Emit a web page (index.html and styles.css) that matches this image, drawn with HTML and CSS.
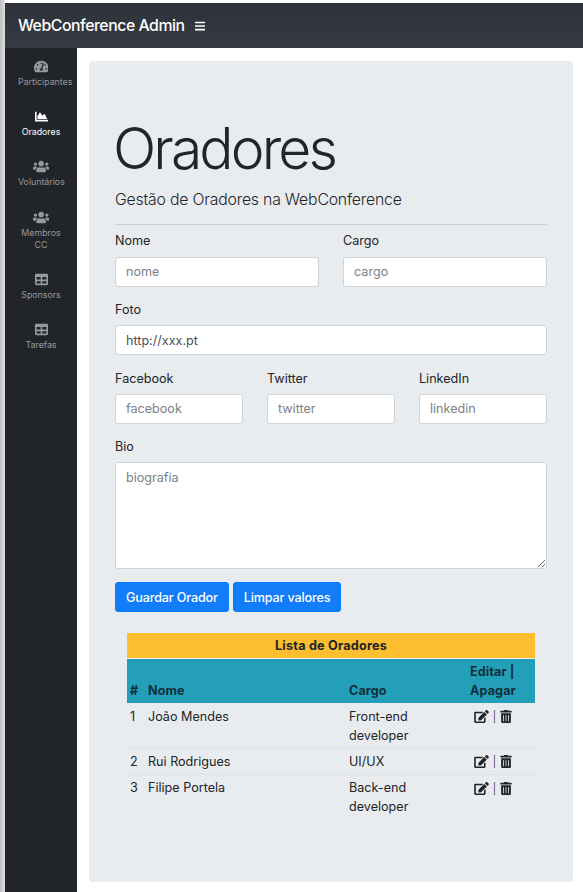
FILE: index.html
```html
<!DOCTYPE html>
<html lang="pt">
<head>
<meta charset="utf-8">
<title>WebConference Admin</title>
<link rel="stylesheet" href="styles.css">
</head>
<body>
<svg class="defs" aria-hidden="true">
  <symbol id="i-gauge" viewBox="0 0 576 512"><path d="M288 32C128.94 32 0 160.94 0 320c0 52.8 14.25 102.26 39.06 144.8 5.61 9.62 16.3 15.2 27.44 15.2h443c11.14 0 21.83-5.58 27.44-15.2C561.75 422.26 576 372.8 576 320c0-159.06-128.94-288-288-288zm0 64c14.71 0 26.58 10.13 30.32 23.65-1.11 2.26-2.64 4.23-3.45 6.67l-9.22 27.67c-5.13 3.49-10.97 6.01-17.64 6.01-17.67 0-32-14.33-32-32S270.33 96 288 96zM96 384c-17.67 0-32-14.33-32-32s14.33-32 32-32 32 14.33 32 32-14.33 32-32 32zm48-160c-17.67 0-32-14.33-32-32s14.33-32 32-32 32 14.33 32 32-14.33 32-32 32zm246.77-72.41l-61.33 184C343.13 347.33 352 364.54 352 384c0 11.72-3.38 22.55-8.88 32H232.88c-5.5-9.45-8.88-20.28-8.88-32 0-33.94 26.5-61.43 59.9-63.59l61.34-184.01c4.17-12.56 17.73-19.45 30.36-15.17 12.57 4.19 19.35 17.79 15.17 30.36zm14.66 57.2l15.52-46.55c3.47-1.29 7.13-2.23 11.05-2.23 17.67 0 32 14.33 32 32s-14.33 32-32 32c-11.38-.01-20.89-6.28-26.57-15.22zM480 384c-17.67 0-32-14.33-32-32s14.33-32 32-32 32 14.33 32 32-14.33 32-32 32z"/></symbol>
  <symbol id="i-chart" viewBox="0 0 512 512"><path d="M500 384c6.6 0 12 5.4 12 12v40c0 6.6-5.4 12-12 12H12c-6.6 0-12-5.4-12-12V76c0-6.6 5.4-12 12-12h40c6.6 0 12 5.4 12 12v308h436zM372.7 159.5L288 216l-85.3-113.7c-5.1-6.8-15.5-6.3-19.9 1L96 248v104h384l-89.9-187.8c-3.2-6.5-11.4-8.7-17.4-4.7z"/></symbol>
  <symbol id="i-users" viewBox="0 0 640 512"><path d="M96 224c35.3 0 64-28.7 64-64s-28.7-64-64-64-64 28.7-64 64 28.7 64 64 64zm448 0c35.3 0 64-28.7 64-64s-28.7-64-64-64-64 28.7-64 64 28.7 64 64 64zm32 32h-64c-17.6 0-33.5 7.1-45.1 18.6 40.3 22.1 68.9 62 75.1 109.4h66c17.7 0 32-14.3 32-32v-32c0-35.3-28.7-64-64-64zm-256 0c61.9 0 112-50.1 112-112S381.9 32 320 32 208 82.1 208 144s50.1 112 112 112zm76.8 32h-8.3c-20.8 10-43.9 16-68.5 16s-47.6-6-68.5-16h-8.3C179.6 288 128 339.6 128 403.2V432c0 26.5 21.5 48 48 48h288c26.5 0 48-21.5 48-48v-28.8c0-63.6-51.6-115.2-115.2-115.2zm-223.7-13.4C161.5 263.1 145.6 256 128 256H64c-35.3 0-64 28.7-64 64v32c0 17.7 14.3 32 32 32h65.9c6.3-47.4 34.9-87.3 75.2-109.4z"/></symbol>
  <symbol id="i-table" viewBox="0 0 512 512"><path d="M464 32H48C21.49 32 0 53.49 0 80v352c0 26.51 21.49 48 48 48h416c26.51 0 48-21.49 48-48V80c0-26.51-21.49-48-48-48zM224 416H64v-96h160v96zm0-160H64v-96h160v96zm224 160H288v-96h160v96zm0-160H288v-96h160v96z"/></symbol>
  <symbol id="i-edit" viewBox="0 0 576 512"><path d="M402.6 83.2l90.2 90.2c3.8 3.8 3.8 10 0 13.8L274.4 405.6l-92.8 10.3c-12.4 1.4-22.9-9.1-21.5-21.5l10.3-92.8L388.8 83.2c3.8-3.8 10-3.8 13.8 0zm162-22.9l-48.8-48.8c-15.2-15.2-39.9-15.2-55.2 0l-35.4 35.4c-3.8 3.8-3.8 10 0 13.8l90.2 90.2c3.8 3.8 10 3.8 13.8 0l35.4-35.4c15.2-15.3 15.2-40 0-55.2zM384 346.2V448H64V128h229.8c3.2 0 6.2-1.3 8.5-3.5l40-40c7.6-7.6 2.2-20.5-8.5-20.5H48C21.5 64 0 85.5 0 112v352c0 26.5 21.5 48 48 48h352c26.5 0 48-21.5 48-48V306.2c0-10.7-12.9-16-20.5-8.5l-40 40c-2.2 2.3-3.5 5.3-3.5 8.5z"/></symbol>
  <symbol id="i-trash" viewBox="0 0 448 512"><path d="M32 464a48 48 0 0 0 48 48h288a48 48 0 0 0 48-48V128H32zm272-256a16 16 0 0 1 32 0v224a16 16 0 0 1-32 0zm-96 0a16 16 0 0 1 32 0v224a16 16 0 0 1-32 0zm-96 0a16 16 0 0 1 32 0v224a16 16 0 0 1-32 0zM432 32H312l-9.4-18.7A24 24 0 0 0 281.1 0H166.8a23.72 23.72 0 0 0-21.4 13.3L136 32H16A16 16 0 0 0 0 48v32a16 16 0 0 0 16 16h416a16 16 0 0 0 16-16V48a16 16 0 0 0-16-16z"/></symbol>
  <symbol id="i-bars" viewBox="0 0 448 512"><path d="M16 132h416c8.837 0 16-7.163 16-16V76c0-8.837-7.163-16-16-16H16C7.163 60 0 67.163 0 76v40c0 8.837 7.163 16 16 16zm0 160h416c8.837 0 16-7.163 16-16v-40c0-8.837-7.163-16-16-16H16c-8.837 0-16 7.163-16 16v40c0 8.837 7.163 16 16 16zm0 160h416c8.837 0 16-7.163 16-16v-40c0-8.837-7.163-16-16-16H16c-8.837 0-16 7.163-16 16v40c0 8.837 7.163 16 16 16z"/></symbol>
</svg>
<div class="shell">
  <header class="topbar">
    <span class="brand">WebConference Admin</span>
    <svg class="bars"><use href="#i-bars"/></svg>
  </header>
  <div class="body-row">
    <nav class="sidebar">
      <a class="nav-item"><svg class="nav-icon gauge"><use href="#i-gauge"/></svg><span class="nav-text">Participantes</span></a>
      <a class="nav-item active"><svg class="nav-icon"><use href="#i-chart"/></svg><span class="nav-text">Oradores</span></a>
      <a class="nav-item"><svg class="nav-icon wide"><use href="#i-users"/></svg><span class="nav-text">Voluntários</span></a>
      <a class="nav-item"><svg class="nav-icon wide"><use href="#i-users"/></svg><span class="nav-text">Membros<br>CC</span></a>
      <a class="nav-item"><svg class="nav-icon"><use href="#i-table"/></svg><span class="nav-text">Sponsors</span></a>
      <a class="nav-item"><svg class="nav-icon"><use href="#i-table"/></svg><span class="nav-text">Tarefas</span></a>
    </nav>
    <main class="content">
      <section class="jumbotron">
        <h1 class="title">Oradores</h1>
        <p class="lead">Gestão de Oradores na WebConference</p>
        <hr class="rule">
        <form class="form">
          <div class="row two">
            <label class="field"><span>Nome</span><input class="input" placeholder="nome"></label>
            <label class="field"><span>Cargo</span><input class="input" placeholder="cargo"></label>
          </div>
          <label class="field"><span>Foto</span><input class="input" value="http://xxx.pt"></label>
          <div class="row three">
            <label class="field"><span>Facebook</span><input class="input" placeholder="facebook"></label>
            <label class="field"><span>Twitter</span><input class="input" placeholder="twitter"></label>
            <label class="field"><span>LinkedIn</span><input class="input" placeholder="linkedin"></label>
          </div>
          <label class="field"><span>Bio</span><textarea class="input area" placeholder="biografia"></textarea></label>
          <div class="buttons">
            <button type="button" class="btn">Guardar Orador</button>
            <button type="button" class="btn">Limpar valores</button>
          </div>
        </form>
        <div class="table-wrap">
          <table class="table">
            <colgroup><col class="c-n"><col class="c-name"><col class="c-role"><col class="c-act"></colgroup>
            <thead>
              <tr class="head-title"><th colspan="4">Lista de Oradores</th></tr>
              <tr class="head-cols"><th>#</th><th>Nome</th><th>Cargo</th><th class="act-head">Editar | Apagar</th></tr>
            </thead>
            <tbody>
              <tr><td>1</td><td>João Mendes</td><td>Front-end developer</td><td class="actions"><svg class="a-edit"><use href="#i-edit"/></svg><i class="sep">|</i><svg class="a-trash"><use href="#i-trash"/></svg></td></tr>
              <tr><td>2</td><td>Rui Rodrigues</td><td>UI/UX</td><td class="actions"><svg class="a-edit"><use href="#i-edit"/></svg><i class="sep">|</i><svg class="a-trash"><use href="#i-trash"/></svg></td></tr>
              <tr><td>3</td><td>Filipe Portela</td><td>Back-end developer</td><td class="actions"><svg class="a-edit"><use href="#i-edit"/></svg><i class="sep">|</i><svg class="a-trash"><use href="#i-trash"/></svg></td></tr>
            </tbody>
          </table>
        </div>
      </section>
    </main>
  </div>
</div>
</body>
</html>
```
FILE: styles.css
```css
* { box-sizing: border-box; }
html, body { height: 100%; }
body {
  margin: 0;
  background: #fff;
  color: #212529;
  font-family: Inter, "Liberation Sans", sans-serif;
  font-size: 12.6px;
  line-height: 19px;
  overflow: hidden;
}
.defs { display: none; }
.shell {
  height: 892px;
  padding: 3px 0 0 5px;
  background: linear-gradient(to right, #bdbdbd, #e0e0e0 5px);
  background-size: 5px 100%;
  background-repeat: no-repeat;
  display: flex;
  flex-direction: column;
}
.topbar {
  height: 45px;
  flex: none;
  display: flex;
  align-items: center;
  padding-left: 13px;
  background: linear-gradient(to bottom, #2e333a, #353a43);
  color: #fff;
}
.brand { font-size: 15.8px; font-weight: 500; letter-spacing: -0.45px; }
.bars { width: 10px; height: 12px; margin-left: 10px; fill: #fff; }
.body-row { flex: 1; display: flex; min-height: 0; }
.sidebar {
  width: 72px;
  flex: none;
  background: #212529;
  padding-top: 12px;
  display: flex;
  flex-direction: column;
}
.nav-item {
  display: block;
  padding: 0 13px;
  text-align: center;
  color: #96999c;
  font-size: 8.8px;
  line-height: 12px;
  margin-bottom: 22.2px;
}
.nav-item.active { color: #fff; }
.nav-icon { display: block; width: 13px; height: 13px; fill: currentColor; margin: 0 auto 3px; }
.nav-icon.gauge { width: 14.6px; }
.nav-icon.wide { width: 16.25px; }
.nav-text { display: block; white-space: nowrap; }
.content { flex: 1; padding: 13px 10px 10px 12px; min-width: 0; }
.jumbotron {
  height: 100%;
  background: #e9ecef;
  border-radius: 4px;
  padding: 54px 26px 0;
}
.title { margin: 0 0 0 -2px; font-size: 57px; line-height: 68px; font-weight: 300; letter-spacing: -2.9px; }
.lead { margin: 5px 0 0; font-size: 15.8px; line-height: 24px; font-weight: 300; letter-spacing: -0.2px; }
.rule { margin: 12px 0 6.4px; border: 0; border-top: 1px solid #ccced1; }
.form { display: flex; flex-direction: column; gap: 13.4px; }
.row { display: grid; gap: 24px; }
.two { grid-template-columns: 1fr 1fr; }
.three { grid-template-columns: 1fr 1fr 1fr; }
.field { display: flex; flex-direction: column; gap: 6.2px; min-width: 0; }
.input {
  display: block;
  width: 100%;
  height: 30px;
  padding: 0 10px;
  border: 1px solid #ced4da;
  border-radius: 3px;
  background: #fff;
  color: #495057;
  font: inherit;
}
.input::placeholder { color: #7d8186; opacity: 1; }
.area { height: 107px; padding: 5px 10px; resize: vertical; }
.buttons { display: flex; gap: 4px; margin-top: -0.6px; }
.btn {
  height: 30px;
  padding: 0 10px;
  border: 1px solid #007bff;
  border-radius: 3px;
  background: #137cf8;
  color: #fff;
  font: inherit;
  font-weight: 500;
  letter-spacing: -0.15px;
}
.table-wrap { padding: 21px 12px 0; }
.table { width: 100%; border-collapse: collapse; table-layout: fixed; }
.c-n { width: 18px; }
.c-name { width: 201px; }
.c-act { width: 68px; }
.table th, .table td { padding: 3px; vertical-align: top; text-align: left; }
.head-title th { background: #fdbe2f; text-align: center; height: 25px; font-weight: 700; letter-spacing: 0.25px; border-bottom: 1px solid #f1f1ee; }
.head-cols th { background: #239fb9; vertical-align: bottom; color: #10303c; font-weight: 700; letter-spacing: 0.1px; padding-bottom: 3px; }
.head-cols .act-head { padding-right: 12px; }
.table td { padding-top: 3.5px; padding-bottom: 3px; }
.table tbody tr:first-child td { padding-top: 4px; padding-bottom: 2px; }
.table tbody tr + tr td { border-top: 1px solid #dee2e6; }
.table tbody tr td.actions { text-align: center; padding-right: 19px; color: #212529; white-space: nowrap; line-height: 13px; padding-top: 7px; }
.a-edit { width: 15px; height: 13px; fill: #212529; vertical-align: top; }
.a-trash { width: 12px; height: 13px; fill: #212529; vertical-align: top; }
.sep { font-style: normal; font-size: 11px; font-weight: 300; margin: 0 4px; }
```
